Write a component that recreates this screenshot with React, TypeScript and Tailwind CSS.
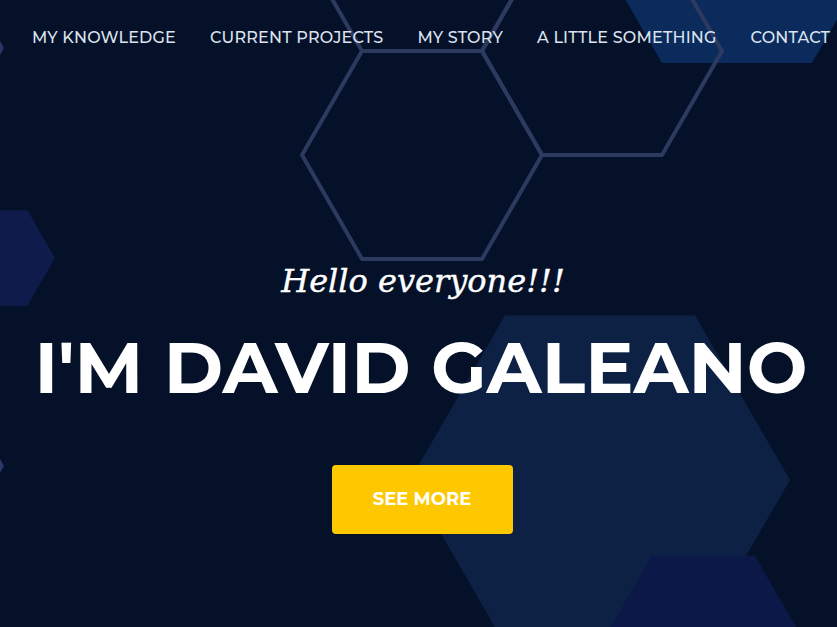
import React from 'react';

const hex = (cx: number, cy: number, s: number) => {
  const h = s * 0.866;
  return [
    [cx - s, cy],
    [cx - s / 2, cy - h],
    [cx + s / 2, cy - h],
    [cx + s, cy],
    [cx + s / 2, cy + h],
    [cx - s / 2, cy + h],
  ]
    .map((p) => p.join(','))
    .join(' ');
};

const navItems = ['MY KNOWLEDGE', 'CURRENT PROJECTS', 'MY STORY', 'A LITTLE SOMETHING', 'CONTACT'];

const HexBackground = () => (
  <svg className="absolute inset-0 w-full h-full" viewBox="0 0 837 627" preserveAspectRatio="none">
    {/* filled hexes */}
    <polygon points={hex(737, -67, 150)} fill="#0a2b5c" />
    <polygon points={hex(0, 258, 55)} fill="#0e1b4b" />
    <polygon points={hex(600, 480, 190)} fill="#0c2143" />
    <polygon points={hex(703.5, 645, 103)} fill="#0c1847" />
    <polygon points={hex(-20, 48, 24)} fill="#2a3767" />
    <polygon points={hex(-22, 466, 26)} fill="#2a3767" />
    {/* outlined hexes */}
    <g fill="none" stroke="#2d3a60" strokeWidth="4" strokeLinejoin="round">
      <polygon points={hex(422, 155, 120)} />
      <polygon points={hex(602, 51, 120)} />
      <polygon points={hex(422, -53, 120)} />
    </g>
  </svg>
);

export default function App() {
  return (
    <div className="relative w-full h-[627px] overflow-hidden bg-[#041129]">
      <HexBackground />

      <div className="relative flex flex-col h-full">
        {/* Nav */}
        <nav className="flex items-center gap-[34px] pl-[32px] pt-[27px] whitespace-nowrap font-['Montserrat','Inter',sans-serif] font-medium text-[16px] leading-[22px] text-[#dde3ef] tracking-[0.2px]">
          {navItems.map((item) => (
            <a key={item} href="#" className="block">
              {item}
            </a>
          ))}
        </nav>

        {/* Hero */}
        <div className="flex flex-col items-center pl-[9px] mt-[212px]">
          <p className="font-['DejaVu_Serif',serif] italic text-[32px] leading-[40px] text-white [-webkit-text-stroke:0.4px_white]">
            Hello everyone!!!
          </p>
          <h1 className="mt-[21px] pr-[4px] font-['Montserrat','Inter',sans-serif] font-bold text-[72px] leading-[90px] text-white whitespace-nowrap">
            I'M DAVID GALEANO
          </h1>
          <button className="mt-[53px] mr-[2px] w-[181px] h-[69px] rounded-[4px] bg-[#fec800] font-['Montserrat','Inter',sans-serif] font-bold text-[18px] text-white">
            SEE MORE
          </button>
        </div>
      </div>
    </div>
  );
}
